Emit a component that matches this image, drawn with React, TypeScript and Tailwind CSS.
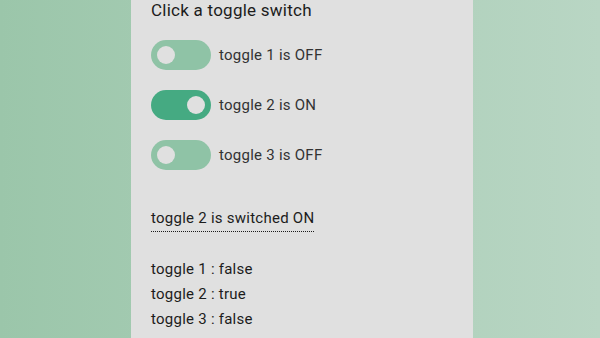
import React, { useState } from "react";

export default function App() {
  const [states, setStates] = useState([false, true, false]);
  const [last, setLast] = useState(1);
  const toggle = (i: number) => {
    setStates((s) => s.map((v, j) => (j === i ? !v : v)));
    setLast(i);
  };
  return (
    <div
      className="w-full h-[338px] overflow-hidden bg-[linear-gradient(to_right,#9bc6aa,#b9d6c4)]"
      style={{ fontFamily: "Roboto, 'Liberation Sans', sans-serif" }}
    >
      <div className="ml-[131px] w-[342px] h-full bg-[#e0e0e0] pl-[20px]">
        <h1 className="text-[17px] leading-[20px] text-[#1c1c1c] tracking-[0.25px]">Click a toggle switch</h1>
        <div className="mt-[20px] flex flex-col gap-[20px]">
          {states.map((on, i) => (
            <div key={i} className="flex items-center gap-[8px] h-[30px]">
              <button
                onClick={() => toggle(i)}
                className={`w-[60px] h-[30px] rounded-full flex items-center px-[6px] ${
                  on ? "bg-[#45aa82] justify-end" : "bg-[#8fc3a6] justify-start"
                }`}
              >
                <span className="block w-[18px] h-[18px] rounded-full bg-[#e0e0e0]" />
              </button>
              <span className="text-[15px] text-[#333333] tracking-[0.25px]">
                toggle {i + 1} is {on ? "ON" : "OFF"}
              </span>
            </div>
          ))}
        </div>
        <div className="mt-[38px] leading-none">
          <span className="inline-block text-[15px] leading-[20px] text-[#1c1c1c] tracking-[0.25px] border-b border-dotted border-[#1c1c1c] pb-[3px]">
            toggle {last + 1} is switched {states[last] ? "ON" : "OFF"}
          </span>
        </div>
        <div className="mt-[25px] flex flex-col">
          {states.map((on, i) => (
            <div key={i} className="text-[15px] leading-[25px] text-[#1c1c1c] tracking-[0.25px]">
              toggle {i + 1} : {on ? "true" : "false"}
            </div>
          ))}
        </div>
      </div>
    </div>
  );
}
